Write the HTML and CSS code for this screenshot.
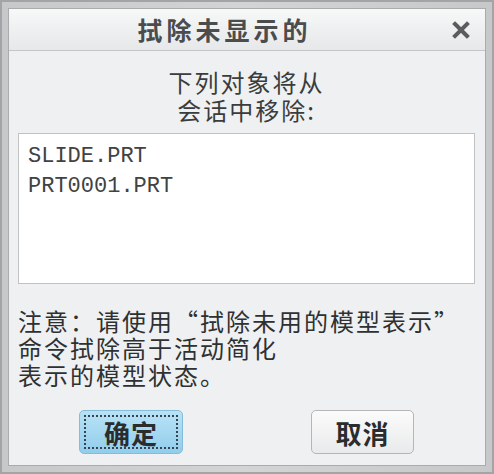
FILE: index.html
```html
<!DOCTYPE html>
<html lang="zh-CN">
<head>
    <meta charset="UTF-8">
    <title>拭除未显示的</title>
    <link rel="stylesheet" href="styles.css">
</head>
<body>
    <div class="window">
        <div class="dialog">
            <div class="titlebar">
                <h1>拭除未显示的</h1>
                <button class="close" type="button" aria-label="关闭">
                    <svg width="18" height="18" viewBox="0 0 18 18">
                        <path d="M3 3 L15 15 M15 3 L3 15" stroke="#5a5c5d" stroke-width="4" stroke-linecap="square"/>
                    </svg>
                </button>
            </div>

            <div class="content">
                <p class="message">下列对象将从<br>会话中移除:</p>

                <div class="list">
                    <div class="list-item">SLIDE.PRT</div>
                    <div class="list-item">PRT0001.PRT</div>
                </div>

                <p class="note">注意：请使用“拭除未用的模型表示”<br>命令拭除高于活动简化<br>表示的模型状态。</p>

                <div class="buttons">
                    <button type="button" class="btn btn-ok"><span class="focus">确定</span></button>
                    <button type="button" class="btn btn-cancel">取消</button>
                </div>
            </div>
        </div>
    </div>
</body>
</html>
```

FILE: styles.css
```css
html, body {
    margin: 0;
    padding: 0;
}
body {
    width: 494px;
    height: 474px;
    font-family: "Noto Sans CJK SC", "Noto Sans", sans-serif;
    color: #2e3031;
    background: #b4b6b7;
}
.window {
    box-sizing: border-box;
    width: 494px;
    height: 474px;
    padding: 6px;
    border: 2px solid #a2a4a5;
    background: linear-gradient(to right, #c6c8c9, #d2d4d5 50%, #c6c8c9);
}
.dialog {
    box-sizing: border-box;
    height: 100%;
    border: 1px solid #a9abac;
    background: #eef0f1;
    display: flex;
    flex-direction: column;
}
.titlebar {
    height: 41px;
    display: flex;
    align-items: center;
    background: linear-gradient(to bottom, #f7f8f8, #e6e8e9);
    border-bottom: 1px solid #c4c6c7;
}
.titlebar h1 {
    flex: 1;
    margin: 0;
    text-align: center;
    font-size: 25px;
    font-weight: bold;
    letter-spacing: 4px;
    color: #4a4c4d;
    line-height: 1;
}
.close {
    margin: 0 15px 0 12px;
    padding: 0;
    border: none;
    background: none;
    width: 18px;
    height: 18px;
}
.content {
    flex: 1;
    padding: 17px 10px 0 9px;
    display: flex;
    flex-direction: column;
}
.message {
    margin: 0;
    text-align: center;
    font-size: 24px;
    line-height: 28px;
    letter-spacing: 2px;
    color: #3a3c3d;
}
.list {
    margin-top: 9px;
    height: 151px;
    box-sizing: border-box;
    background: #ffffff;
    border: 1px solid #bfc1c2;
    padding: 8px 9px;
}
.list-item {
    font-family: "Liberation Mono", monospace;
    font-size: 22px;
    line-height: 30px;
    color: #404243;
}
.note {
    margin: 23px 0 0;
    font-size: 24px;
    line-height: 27px;
    letter-spacing: 2px;
    color: #2e3031;
}
.buttons {
    margin-top: 22px;
    display: flex;
    justify-content: center;
    gap: 128px;
}
.btn {
    width: 104px;
    height: 44px;
    border-radius: 5px;
    font-family: "Noto Sans CJK SC", sans-serif;
    font-size: 26px;
    font-weight: bold;
    color: #2a2c2d;
    padding: 0;
    letter-spacing: 1px;
}
.btn-ok {
    border: 1px solid #86bcd8;
    background: linear-gradient(to bottom, #b8e2f6, #92cdec);
    padding: 4px;
}
.btn-ok .focus {
    display: flex;
    align-items: center;
    justify-content: center;
    height: 100%;
    box-sizing: border-box;
    border: 2px dotted #354550;
}
.btn-cancel {
    width: 103px;
    border: 1px solid #b4b6b7;
    background: linear-gradient(to bottom, #fbfbfb, #e9eaeb);
}
```
